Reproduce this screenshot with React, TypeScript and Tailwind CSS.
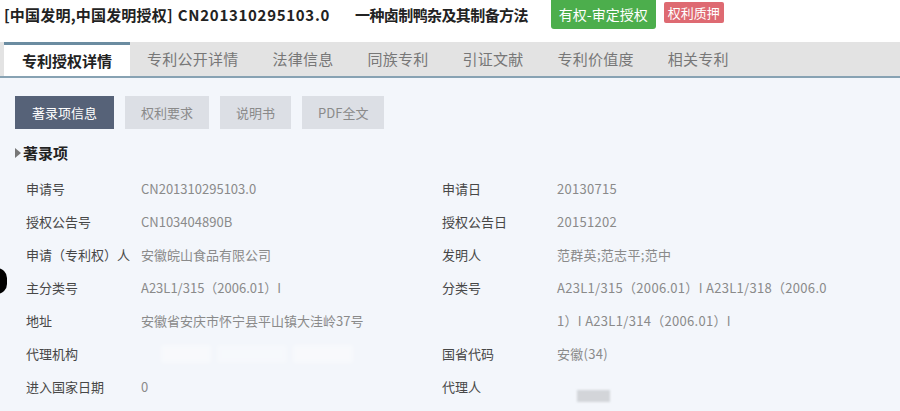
import React from 'react';

const TABS = ['专利公开详情', '法律信息', '同族专利', '引证文献', '专利价值度', '相关专利'];
const SUB_TABS = ['权利要求', '说明书', 'PDF全文'];

const LEFT_ROWS: [string, string][] = [
  ['申请号', 'CN201310295103.0'],
  ['授权公告号', 'CN103404890B'],
  ['申请（专利权）人', '安徽皖山食品有限公司'],
  ['主分类号', 'A23L1/315（2006.01）I'],
  ['地址', '安徽省安庆市怀宁县平山镇大洼岭37号'],
  ['代理机构', ''],
  ['进入国家日期', '0'],
];

const RIGHT_ROWS: [string, string[]][] = [
  ['申请日', ['20130715']],
  ['授权公告日', ['20151202']],
  ['发明人', ['范群英;范志平;范中']],
  ['分类号', ['A23L1/315（2006.01）I A23L1/318（2006.0', '1）I A23L1/314（2006.01）I']],
  ['国省代码', ['安徽(34)']],
  ['代理人', ['']],
];

export default function App() {
  return (
    <div className="relative h-[411px] w-[900px] overflow-hidden bg-[#f3f6fb] font-['Noto_Sans_CJK_SC',sans-serif]">
      {/* Title */}
      <div className="flex h-[42px] items-start bg-white">
        <h1 className="ml-[4px] mt-[5px] shrink-0 whitespace-nowrap text-[15px] font-bold leading-5 text-[#222]">
          <span className="tracking-[0.2px]">[中国发明,中国发明授权]</span>
          <span className="ml-[5px] tracking-[0.7px]">CN201310295103.0</span>
          <span className="ml-[25px] tracking-[-0.6px]">一种卤制鸭杂及其制备方法</span>
        </h1>
        <span className="ml-[23px] h-[29px] rounded-b-[3px] bg-[#4cae4c] px-[8px] text-[14px] leading-[29px] text-white">
          有权-审定授权
        </span>
        <span className="ml-[8px] mt-[2px] h-[21px] rounded-[2px] bg-[#de6a72] px-[4px] text-[13px] leading-[21px] text-white">
          权利质押
        </span>
      </div>

      {/* Tabs */}
      <div className="flex h-[36px] border-b-2 border-[#87a2b3] bg-[#e3e3e3] pl-[4px]">
        <div className="w-[126px] border-t-[3px] border-[#6b8ca1] bg-white text-center text-[15px] font-bold leading-[31px] text-[#222]">
          专利授权详情
        </div>
        {TABS.map((t) => (
          <div key={t} className="px-[17px] text-[15px] leading-[34px] tracking-[0.25px] text-[#777]">
            {t}
          </div>
        ))}
      </div>

      {/* Sub tabs */}
      <div className="mt-[18px] flex gap-[11px] pl-[15px]">
        <div className="h-[33px] bg-[#566278] px-[17px] text-[13px] leading-[33px] text-white">著录项信息</div>
        {SUB_TABS.map((t) => (
          <div key={t} className="h-[33px] bg-[#dcdfe5] px-[16px] text-[13px] leading-[33px] text-[#8a8a8a]">
            {t}
          </div>
        ))}
      </div>

      {/* Section heading */}
      <div className="mt-[14px] flex items-center pl-[15px]">
        <span className="mr-[2px] h-0 w-0 border-y-[5px] border-l-[6px] border-y-transparent border-l-[#777]" />
        <h2 className="text-[15px] font-bold leading-5 text-[#222]">著录项</h2>
      </div>

      {/* Fields */}
      <div className="mt-[9px] grid grid-cols-[416px_1fr] pl-[26px] text-[13px] leading-[33px]">
        <div>
          {LEFT_ROWS.map(([label, value]) => (
            <div key={label} className="flex">
              <span className="w-[115px] shrink-0 text-[#474747]">{label}</span>
              {label === '代理机构' ? (
                <span className="flex items-center gap-[6px] pl-[20px]">
                  <span className="h-[18px] w-[50px] bg-white/40 blur-[2px]" />
                  <span className="h-[18px] w-[70px] bg-white/30 blur-[2px]" />
                  <span className="h-[18px] w-[60px] bg-white/40 blur-[2px]" />
                </span>
              ) : (
                <span className="whitespace-nowrap text-[#8a8a8a]">{value}</span>
              )}
            </div>
          ))}
        </div>
        <div>
          {RIGHT_ROWS.map(([label, lines]) => (
            <div key={label} className="flex">
              <span className="w-[115px] shrink-0 text-[#474747]">{label}</span>
              {label === '代理人' ? (
                <span className="ml-[20px] mt-[20px] h-[12px] w-[33px] bg-[#d3d5d9] blur-[1px]" />
              ) : (
                <span className="text-[#8a8a8a] tracking-[0.3px]">
                  {lines.map((l) => (
                    <span key={l} className="block whitespace-nowrap">{l}</span>
                  ))}
                </span>
              )}
            </div>
          ))}
        </div>
      </div>

      {/* Dark artefact at the left edge */}
      <div className="absolute left-[-13px] top-[268px] h-[26px] w-[20px] rounded-full bg-black" />
    </div>
  );
}
